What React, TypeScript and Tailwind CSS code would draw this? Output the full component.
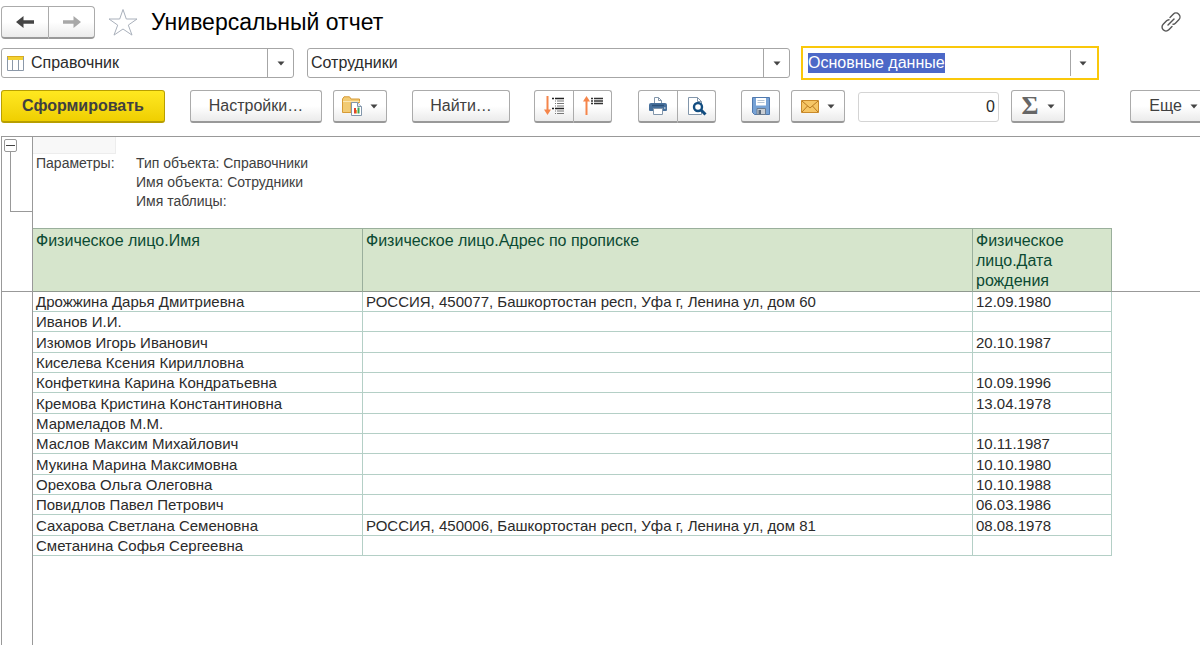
import React, { useEffect, useRef } from "react";
import clsx from "clsx";

interface Person {
  name: string;
  address?: string;
  birthday?: string;
}

const people: Person[] = [
  { name: "Дрожжина Дарья Дмитриевна", address: "РОССИЯ, 450077, Башкортостан респ, Уфа г, Ленина ул, дом 60", birthday: "12.09.1980" },
  { name: "Иванов И.И." },
  { name: "Изюмов Игорь Иванович", birthday: "20.10.1987" },
  { name: "Киселева Ксения Кирилловна" },
  { name: "Конфеткина Карина Кондратьевна", birthday: "10.09.1996" },
  { name: "Кремова Кристина Константиновна", birthday: "13.04.1978" },
  { name: "Мармеладов М.М." },
  { name: "Маслов Максим Михайлович", birthday: "10.11.1987" },
  { name: "Мукина Марина Максимовна", birthday: "10.10.1980" },
  { name: "Орехова Ольга Олеговна", birthday: "10.10.1988" },
  { name: "Повидлов Павел Петрович", birthday: "06.03.1986" },
  { name: "Сахарова Светлана Семеновна", address: "РОССИЯ, 450006, Башкортостан респ, Уфа г, Ленина ул, дом 81", birthday: "08.08.1978" },
  { name: "Сметанина Софья Сергеевна" },
];

function Caret() {
  return (
    <svg viewBox="0 0 8 5" className="h-[5px] w-2 shrink-0" fill="#444" aria-hidden="true">
      <path d="M0.5 0.5h7L4 4.5z" />
    </svg>
  );
}

function BackIcon({ className }: { className: string }) {
  return (
    <svg viewBox="0 0 18 14" className={clsx("h-3.5 w-[18px]", className)} fill="currentColor" aria-hidden="true">
      <path d="M0 7 7.500 1v4.200H18v3.600H7.500V13z" />
    </svg>
  );
}

function StarIcon() {
  return (
    <svg viewBox="0 0 30 28" className="h-7 w-[30px]" fill="#fff" stroke="#a9b0bb" aria-hidden="true">
      <path d="M15 1.500 18.300 11h10.700l-8.700 6.100 3.700 10L15 21l-9 6.100 3.700-10L1 11h10.700z" />
    </svg>
  );
}

function LinkIcon() {
  return (
    <svg viewBox="0 0 20 20" className="size-5" fill="none" stroke="#555" strokeWidth="1.4" strokeLinecap="round" aria-hidden="true">
      <path d="M9 5.400 12.200 2.200a3.900 3.900 0 0 1 5.600 5.600l-3.400 3.400a3.900 3.900 0 0 1-2.400 1.100" />
      <path d="m11 14.600-3.200 3.200A3.900 3.900 0 0 1 2.200 12.200l3.400-3.400a3.900 3.900 0 0 1 2.400-1.100" />
      <path d="m7 13 6-6" />
    </svg>
  );
}

function TableIcon() {
  return (
    <svg viewBox="0 0 17 15" className="h-[15px] w-[17px] shrink-0" aria-hidden="true">
      <path d="M.5.5h16v14H.5z" fill="#fff" stroke="#8b98a8" />
      <path d="M1 1h15v3H1z" fill="#f4d230" />
      <path d="M0 .5h17" stroke="#d9ab1c" />
      <path d="M5.500 4v10M11.500 4v10" stroke="#8b98a8" />
    </svg>
  );
}

function FolderReportIcon() {
  return (
    <svg viewBox="0 0 20 20" className="size-5" aria-hidden="true">
      <path d="M.5 16.500V3L2 .8h5.500L9 3h8.500v3.500H9v10z" fill="#f2cb74" stroke="#d69a35" />
      <path d="M1 5.500h16.500" stroke="#fbe7b4" />
      <path d="M9.500 6.500h6l4 4v9h-10z" fill="#fff" stroke="#8296ab" />
      <path d="M15.500 6.500v4h4" fill="#e8eef4" stroke="#8296ab" />
      <path d="M12 12h2v5.500h-2z" fill="#e0442e" />
      <path d="M14 14h1v3.500h-1z" fill="#e8a33c" />
      <path d="M15.500 11.500h2v6h-2z" fill="#3fa558" />
    </svg>
  );
}

function ExpandIcon() {
  return (
    <svg viewBox="0 0 20 20" className="size-5" aria-hidden="true">
      <path d="M3.500 0v15" stroke="#f5854a" strokeWidth="2" />
      <path d="M0 13.500h7L3.500 19z" fill="#f5854a" />
      <path d="M8 2.500h2M11 2.500h9M8 12.500h2M11 12.500h9" stroke="#222" strokeWidth="1.600" />
      <path d="M11 5h1M13 5h7M11 7.500h1M13 7.500h7M11 10h1M13 10h7M11 15h1M13 15h7M11 17.500h1M13 17.500h7" stroke="#777" />
    </svg>
  );
}

function CollapseIcon() {
  return (
    <svg viewBox="0 0 20 20" className="size-5" aria-hidden="true">
      <path d="M3.500 4v15" stroke="#f5854a" strokeWidth="2" />
      <path d="M0 5.500h7L3.500 0z" fill="#f5854a" />
      <path d="M8 2.500h2M11 2.500h9M8 5h2M11 5h9M8 7.500h2M11 7.500h9" stroke="#333" strokeWidth="1.400" />
    </svg>
  );
}

function PrinterIcon() {
  return (
    <svg viewBox="0 0 20 20" className="size-5" aria-hidden="true">
      <path d="M6.500 8V1.500h4l3 3V8" fill="#fff" stroke="#8296ab" />
      <path d="M10.500 1.500v3h3" fill="none" stroke="#8296ab" />
      <path d="M3 7h14a2 2 0 0 1 2 2v5a1 1 0 0 1-1 1H2a1 1 0 0 1-1-1V9a2 2 0 0 1 2-2z" fill="#47709c" />
      <path d="M4 9.500h12" stroke="#2d517a" strokeWidth="1.500" />
      <path d="M5.500 12.500h9v6h-9z" fill="#fff" stroke="#8296ab" />
      <path d="M16 12h1.500" stroke="#fff" />
    </svg>
  );
}

function PreviewIcon() {
  return (
    <svg viewBox="0 0 20 20" className="size-5" aria-hidden="true">
      <path d="M1.500 1.500h9l4 4v13h-13z" fill="#fff" stroke="#8296ab" />
      <path d="M10.500 1.500v4h4" fill="none" stroke="#8296ab" />
      <circle cx="11" cy="11" r="4" fill="#fff" stroke="#124d80" strokeWidth="2.400" />
      <path d="m14 14 4.500 4.500" stroke="#124d80" strokeWidth="3" />
    </svg>
  );
}

function SaveIcon() {
  return (
    <svg viewBox="0 0 18 18" className="size-[18px]" aria-hidden="true">
      <path d="M.5.5h17v17h-15l-2-2z" fill="#77a2d5" stroke="#5079ae" />
      <path d="M4 1h10v7.500H4z" fill="#fff" />
      <path d="M5.500 3.500h7M5.500 5.500h7" stroke="#b5c4d4" />
      <path d="M5 11.500h8.500v6H5z" fill="#c9ced4" stroke="#6b7c90" />
      <path d="M6.500 13h2.500v4H6.500z" fill="#59687a" />
    </svg>
  );
}

function MailIcon() {
  return (
    <svg viewBox="0 0 18 13" className="h-[13px] w-[18px]" aria-hidden="true">
      <path d="M.5.5h17v12H.5z" fill="#f6c666" stroke="#c98a2b" />
      <path d="m1 1 8 7 8-7M1 12l5.500-6M17 12l-5.500-6" fill="none" stroke="#b9791f" />
    </svg>
  );
}

const raised =
  "flex h-[33px] shrink-0 items-center justify-center border border-b-2 border-[#ababab] border-b-[#999] bg-linear-to-b from-white from-50% to-[#ebebeb] text-[#404040]";

interface ToolButtonProps {
  className?: string;
  label?: string;
  children: React.ReactNode;
}

function ToolButton({ className, label, children }: ToolButtonProps) {
  return (
    <button type="button" aria-label={label} title={label} className={clsx(raised, className)}>
      {children}
    </button>
  );
}

function Combo({ label, value, icon, className }: { label: string; value: string; icon?: React.ReactNode; className: string }) {
  return (
    <div className={clsx("flex h-[30px] items-center rounded-[3px] border border-[#a6a6a6] bg-white", className)}>
      {icon}
      <select aria-label={label} defaultValue={value} className="h-full min-w-0 flex-1 appearance-none px-[3px] text-base leading-5 outline-none">
        <option>{value}</option>
      </select>
      <button type="button" aria-label={`${label}: выбрать`} className="flex h-full w-[26px] items-center justify-center border-l border-[#a6a6a6]">
        <Caret />
      </button>
    </div>
  );
}

function TableNameField() {
  const inputRef = useRef<HTMLInputElement>(null);

  useEffect(() => {
    inputRef.current?.focus();
    inputRef.current?.select();
  }, []);

  return (
    <div className="mr-[101px] flex h-[34px] w-[298px] shrink-0 items-center border-2 border-[#fac80a] bg-white p-[2px]">
      <input
        ref={inputRef}
        type="text"
        aria-label="Имя таблицы"
        defaultValue="Основные данные"
        className="h-5 min-w-0 flex-1 px-[3px] text-base leading-5 outline-none selection:bg-[#4a66c6]/99 selection:text-white"
      />
      <button type="button" aria-label="Имя таблицы: выбрать" className="flex h-full w-[25px] items-center justify-center border-l border-[#a6a6a6]">
        <Caret />
      </button>
    </div>
  );
}

function TitleBar() {
  return (
    <header className="flex h-11 items-center pl-px">
      <div className="flex">
        <ToolButton label="Назад" className="h-[31px] w-12 rounded-l-[4px]">
          <BackIcon className="text-[#444]" />
        </ToolButton>
        <ToolButton label="Вперед" className="h-[31px] w-[46px] rounded-r-[4px] border-l-0">
          <BackIcon className="rotate-180 text-[#a8a8a8]" />
        </ToolButton>
      </div>
      <button type="button" aria-label="Добавить в избранное" className="ml-[13px]">
        <StarIcon />
      </button>
      <h1 className="ml-[13px] flex-1 text-[23px] leading-7 text-black">Универсальный отчет</h1>
      <button type="button" aria-label="Получить ссылку" className="mr-[19px]">
        <LinkIcon />
      </button>
    </header>
  );
}

function Toolbar() {
  return (
    <div className="mt-[10px] flex pl-px text-base">
      <button
        type="button"
        className="h-[33px] w-[164px] shrink-0 rounded-[3px] border border-b-2 border-[#b89f00] bg-linear-to-b from-[#ffe81f] to-[#efcf00] font-bold text-[#404040]"
      >
        Сформировать
      </button>
      <ToolButton className="ml-[25px] w-[132px] rounded-[3px]">Настройки…</ToolButton>
      <ToolButton label="Варианты отчета" className="ml-[11px] w-[54px] gap-2 rounded-[3px]">
        <FolderReportIcon />
        <Caret />
      </ToolButton>
      <ToolButton className="ml-[25px] w-[98px] rounded-[3px]">Найти…</ToolButton>
      <div className="ml-6 flex">
        <ToolButton label="Развернуть группы" className="w-10 rounded-l-[3px]">
          <ExpandIcon />
        </ToolButton>
        <ToolButton label="Свернуть группы" className="w-[38px] rounded-r-[3px] border-l-0">
          <CollapseIcon />
        </ToolButton>
      </div>
      <div className="ml-[26px] flex">
        <ToolButton label="Печать" className="w-10 rounded-l-[3px]">
          <PrinterIcon />
        </ToolButton>
        <ToolButton label="Предварительный просмотр" className="w-[38px] rounded-r-[3px] border-l-0">
          <PreviewIcon />
        </ToolButton>
      </div>
      <ToolButton label="Сохранить" className="ml-[25px] w-[39px] rounded-[3px]">
        <SaveIcon />
      </ToolButton>
      <ToolButton label="Отправить по почте" className="ml-[11px] w-[54px] gap-2 rounded-[3px]">
        <MailIcon />
        <Caret />
      </ToolButton>
      <input
        type="text"
        aria-label="Сумма"
        defaultValue="0"
        className="mt-[2px] ml-[13px] h-[30px] w-[141px] rounded-[3px] border border-[#d4d4d4] px-[3px] text-right outline-none"
      />
      <ToolButton label="Итоги" className="ml-3 w-[54px] gap-2 rounded-[3px]">
        <span className="font-['Liberation_Serif',serif] text-[26px] leading-6 font-bold text-[#666]">Σ</span>
        <Caret />
      </ToolButton>
      <ToolButton className="ml-auto w-[70px] gap-2 rounded-l-[3px] border-r-0 pl-4">
        Еще
        <Caret />
      </ToolButton>
    </div>
  );
}

// Column with the group markers to the left of the sheet
function GroupGutter() {
  return (
    <div className="flex w-[31px] shrink-0 flex-col border-r border-[#999]">
      <div className="h-[155px] border-b border-[#999] pt-[2px] pl-[2px]">
        <button type="button" aria-label="Свернуть" className="flex size-[13px] items-center justify-center rounded-[2px] border border-[#999]">
          <span className="h-px w-[9px] bg-[#444]" />
        </button>
        <div className="ml-[6px] h-[60px] border-b border-l border-[#999]" />
      </div>
    </div>
  );
}

function Parameters() {
  return (
    <dl className="flex h-[74px] pl-[3px] text-sm leading-[19px] text-[#404040]">
      <dt className="w-[100px] shrink-0">Параметры:</dt>
      <dd>
        <p>Тип объекта: Справочники</p>
        <p>Имя объекта: Сотрудники</p>
        <p>Имя таблицы:</p>
      </dd>
    </dl>
  );
}

function ReportTable() {
  const head = "border-r border-y border-[#9aaf9c] border-b-[#8f998f] px-[3px] pt-[2px] pb-0 text-left align-top font-normal";
  const cell = "border-r border-b border-[#b4cfc6] px-[3px] py-0";

  return (
    <div className="flex items-start">
      <table className="flex-1 table-fixed border-separate border-spacing-0 text-[15px] leading-[19px] text-[#2b2b2b]">
        <colgroup>
          <col className="w-[330px]" />
          <col />
          <col className="w-[139px]" />
        </colgroup>
        <thead className="bg-[#d6e5cc] text-base leading-5 text-[#0b4a33]">
          <tr className="h-16">
            <th className={head}>Физическое лицо.Имя</th>
            <th className={head}>Физическое лицо.Адрес по прописке</th>
            <th className={head}>Физическое лицо.Дата рождения</th>
          </tr>
        </thead>
        <tbody>
          {people.map((person) => (
            <tr key={person.name} className="h-5 nth-[3n]:h-[21px]">
              <td className={cell}>{person.name}</td>
              <td className={cell}>{person.address}</td>
              <td className={cell}>{person.birthday}</td>
            </tr>
          ))}
        </tbody>
      </table>
      <div className="h-16 w-[88px] shrink-0 border-b border-[#999]" />
    </div>
  );
}

export default function App() {
  return (
    <div className="flex min-h-screen flex-col overflow-x-hidden bg-white font-['Liberation_Sans',Arial,sans-serif] text-[#2b2b2b]">
      <TitleBar />
      <div className="mt-[2px] flex h-[34px] items-center pl-px">
        <Combo label="Тип объекта" value="Справочник" icon={<span className="pr-1 pl-[5px]"><TableIcon /></span>} className="w-[293px] shrink-0" />
        <Combo label="Имя объекта" value="Сотрудники" className="mr-[11px] ml-[13px] min-w-0 flex-1" />
        <TableNameField />
      </div>
      <Toolbar />
      <main className="mt-[13px] ml-px flex flex-1 border-t border-l border-[#999]">
        <GroupGutter />
        <div className="min-w-0 flex-1">
          <div className="h-[17px] w-[83px] border-r border-b border-[#ededed] bg-[#f8f8f8]" />
          <Parameters />
          <ReportTable />
        </div>
      </main>
    </div>
  );
}
